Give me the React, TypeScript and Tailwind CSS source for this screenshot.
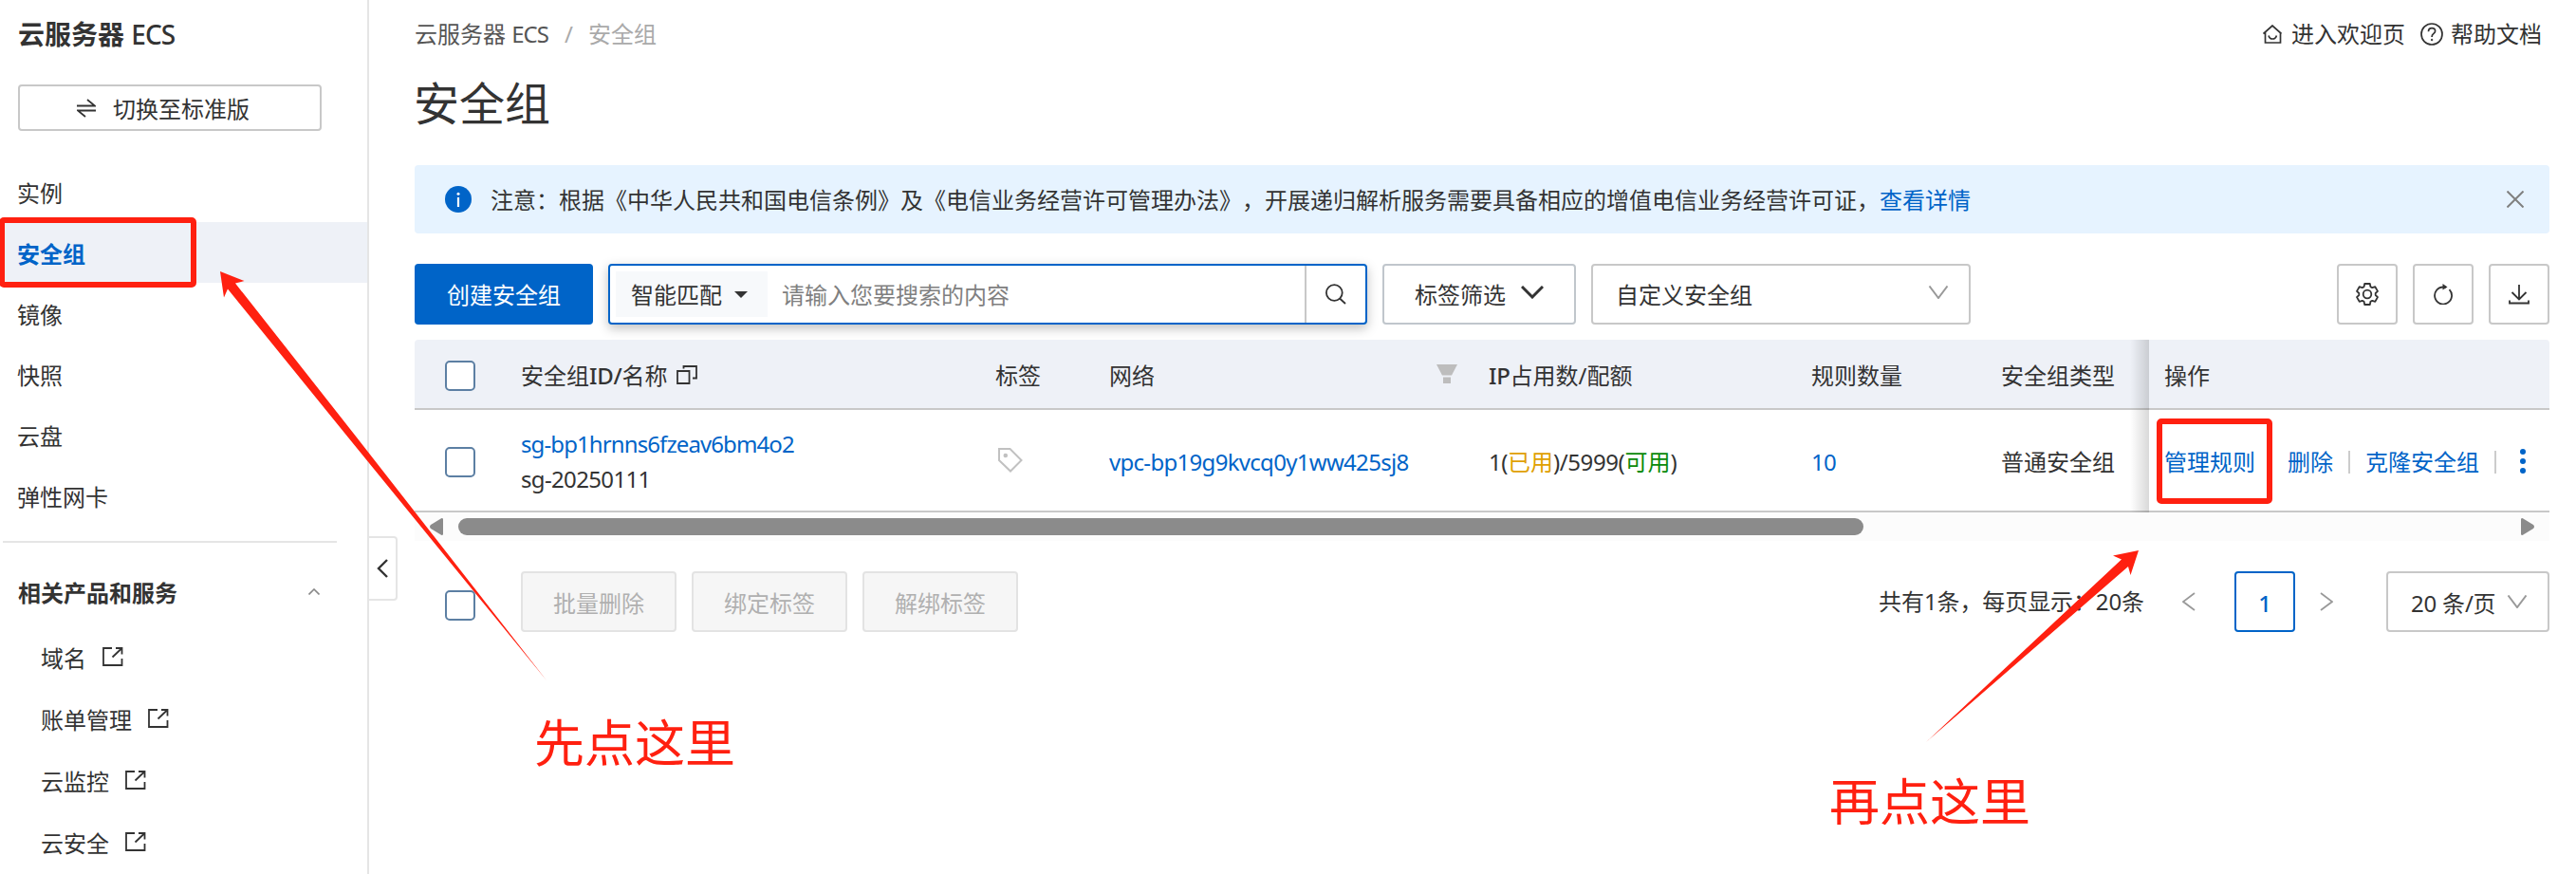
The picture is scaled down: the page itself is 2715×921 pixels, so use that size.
import React from 'react';

interface IconProps {
  className?: string;
}

const NAV_ITEMS: string[] = ['实例', '安全组', '镜像', '快照', '云盘', '弹性网卡'];
const RELATED_LINKS: string[] = ['域名', '账单管理', '云监控', '云安全'];
const BATCH_ACTIONS: string[] = ['批量删除', '绑定标签', '解绑标签'];

const SwitchIcon: React.FC<IconProps> = ({ className }) => (
  <svg className={className} width="20" height="20" viewBox="0 0 20 20" fill="none" stroke="#333" strokeWidth="1.8">
    <path d="M0 7.5h19L11 1M20 12.5H1l8 6.5" />
  </svg>
);

const ExternalIcon: React.FC<IconProps> = ({ className }) => (
  <svg className={className} width="22" height="20" viewBox="0 0 22 20" fill="none" stroke="#333" strokeWidth="1.8">
    <path d="M10 1H1v18h19.5V12M14 1h6.5v6.5M20.5 1L10.5 10.5" />
  </svg>
);

const HomeIcon: React.FC = () => (
  <svg width="20" height="20" viewBox="0 0 20 20" fill="none" stroke="#333" strokeWidth="1.7">
    <path d="M0.5 9.5L10 1l9.5 8.5M2.5 8v11h16V8" />
    <path d="M6 11.5c.6 2.4 2 3.5 4.200 3.500s3.600-1.100 4.200-3.500" />
  </svg>
);

const HelpIcon: React.FC = () => (
  <svg width="24" height="24" viewBox="0 0 24 24" fill="none" stroke="#333" strokeWidth="1.7">
    <circle cx="12" cy="12" r="11" />
    <path d="M8.500 9.200c0-2.100 1.500-3.500 3.600-3.500s3.500 1.300 3.500 3.100c0 2.600-3.500 2.700-3.500 5.700v.6" />
    <circle cx="12.1" cy="18" r="0.800" fill="#333" stroke="#333" strokeWidth="1" />
  </svg>
);

const InfoIcon: React.FC = () => (
  <svg width="28" height="28" viewBox="0 0 28 28">
    <circle cx="14" cy="14" r="14" fill="#0064c8" />
    <circle cx="14" cy="8.300" r="1.500" fill="#fff" />
    <path d="M14 12v10" stroke="#fff" strokeWidth="2.2" />
  </svg>
);

const CopyIcon: React.FC = () => (
  <svg width="22" height="20" viewBox="0 0 22 20" fill="none" stroke="#333" strokeWidth="1.8">
    <path d="M1 6h12.500v13H1zM7.500 3.500V1H21v12.500h-4" />
  </svg>
);

const FilterIcon: React.FC = () => (
  <svg className="mb-1" width="22" height="20" viewBox="0 0 22 20" fill="#bdbdbd">
    <path d="M0 0h22l-6 11.500H6zM7 13.500h8V20H7z" />
  </svg>
);

const TagIcon: React.FC = () => (
  <svg className="mb-1" width="26" height="26" viewBox="0 0 26 26" fill="none" stroke="#c1c1c1" strokeWidth="2">
    <path d="M1 1h11.500l12 12-11.500 11.500L1 13z" />
    <circle cx="7.800" cy="8" r="2.300" fill="#c1c1c1" stroke="none" />
  </svg>
);

const SearchIcon: React.FC = () => (
  <svg width="22" height="22" viewBox="0 0 22 22" fill="none" stroke="#333" strokeWidth="1.8">
    <circle cx="9.300" cy="9.500" r="8.400" />
    <path d="M15 15.500l6 5.500" />
  </svg>
);

const GearIcon: React.FC = () => (
  <svg width="24" height="24" viewBox="0 0 24 24" fill="none" stroke="#333" strokeWidth="1.8" strokeLinejoin="round">
    <path d="M9.200 1h5.600l.6 3.100 1.900 1.100 3-1 2.700 4.700-2.300 2.100v2l2.300 2.100-2.700 4.700-3-1-1.900 1.100-.6 3.100H9.200l-.6-3.100-1.900-1.100-3 1L1 15.100 3.300 13v-2L1 8.900l2.700-4.700 3 1 1.900-1.100z" />
    <circle cx="12" cy="12" r="4.300" />
  </svg>
);

const RefreshIcon: React.FC = () => (
  <svg width="20" height="22" viewBox="0 0 20 22" fill="none" stroke="#333" strokeWidth="1.8">
    <path d="M16.500 6.200a9 9 0 1 1-6.500-2.700h3" />
    <path d="M9.500 0l5 3.600-5 3z" fill="#333" stroke="none" />
  </svg>
);

const DownloadIcon: React.FC = () => (
  <svg width="22" height="22" viewBox="0 0 22 22" fill="none" stroke="#333" strokeWidth="1.800">
    <path d="M11 1v15M3.500 9l7.500 7.500L18.500 9M1 17.500v3h20v-3" />
  </svg>
);

interface ChevronProps extends IconProps {
  color?: string;
  weight?: number;
}

const ChevronDown: React.FC<ChevronProps> = ({ className, color = '#999', weight = 2 }) => (
  <svg className={className} width="24" height="14" viewBox="0 0 24 14" fill="none" stroke={color} strokeWidth={weight}>
    <path d={weight > 2 ? 'M1 1l11 11L23 1' : 'M2.500 0.500L12 13l9.500-12.500'} />
  </svg>
);

const ChevronSide: React.FC<{ right?: boolean }> = ({ right }) => (
  <svg width="14" height="20" viewBox="0 0 14 20" fill="none" stroke="#999" strokeWidth="1.8">
    <path d={right ? 'M1 1l12 9L1 19' : 'M13 1L1 10l12 9'} />
  </svg>
);

const Checkbox: React.FC = () => (
  <div className="h-8 w-8 shrink-0 rounded-[5px] border-2 border-[#5c7fa3] bg-white" />
);

const Sidebar: React.FC = () => (
  <aside className="relative flex h-full w-[389px] shrink-0 flex-col border-r-2 border-[#e5e5e5] text-[24px] leading-8">
    <h2 className="mt-5 pl-[19px] text-[28px] font-bold">
      云服务器 <span className="font-medium tracking-[-1px]">ECS</span>
    </h2>
    <button className="mt-[37px] ml-[19px] flex h-[49px] w-80 items-center rounded border-2 border-[#c8c8c8] pt-0.5 pl-15">
      <SwitchIcon className="mr-[18px] mb-0.5" />
      切换至标准版
    </button>
    <nav className="mt-8 flex flex-col">
      {NAV_ITEMS.map((item) => (
        <a
          key={item}
          className={
            item === '安全组'
              ? 'flex h-16 items-center bg-[#eef1f7] pt-[3px] pl-[18px] font-bold text-[#0064c8]'
              : 'flex h-16 items-center pt-[3px] pl-[18px]'
          }
        >
          {item}
        </a>
      ))}
    </nav>
    <div className="mt-4 ml-[3px] h-0.5 w-[352px] bg-[#e5e5e5]" />
    <div className="mt-[37px] flex items-center justify-between pr-[50px] pl-[19px] font-bold">
      相关产品和服务
      <svg className="mb-1" width="12" height="7" viewBox="0 0 12 7" fill="none" stroke="#888" strokeWidth="1.600">
        <path d="M0.500 6.500L6 1l5.500 5.500" />
      </svg>
    </div>
    <div className="mt-[19px] flex flex-col">
      {RELATED_LINKS.map((link) => (
        <a key={link} className="flex h-[65px] items-center pt-[3px] pl-[43px]">
          {link}
          <ExternalIcon className="mb-[5px] ml-[17px]" />
        </a>
      ))}
    </div>
    <div className="absolute top-[565px] left-[387px] flex h-[68px] w-8 items-center justify-center rounded-r border-2 border-[#e5e5e5] bg-white">
      <svg width="12" height="20" viewBox="0 0 12 20" fill="none" stroke="#333" strokeWidth="2.400">
        <path d="M11 1L2 10l9 9" />
      </svg>
    </div>
  </aside>
);

const PageHeader: React.FC = () => (
  <header>
    <div className="mt-[19px] flex items-center justify-between pr-2">
      <div className="flex items-center pt-px text-[#555]">
        云服务器&nbsp;<span className="tracking-[-1px]">ECS</span>
        <span className="ml-[17px] text-[#aaa]">/</span>
        <span className="ml-4 text-[#aaa]">安全组</span>
      </div>
      <div className="flex items-center">
        <HomeIcon />
        <span className="ml-[10px]">进入欢迎页</span>
        <span className="ml-4">
          <HelpIcon />
        </span>
        <span className="ml-2">帮助文档</span>
      </div>
    </div>
    <h1 className="mt-[25px] ml-[-1px] text-[48px] leading-[64px]">安全组</h1>
  </header>
);

const Notice: React.FC = () => (
  <div className="mt-[33px] flex h-[72px] items-center rounded bg-[#e6f3ff] pr-[27px] pl-8">
    <InfoIcon />
    <p className="ml-5 grow pt-0.5 [text-spacing-trim:space-all]">
      注意：根据《中华人民共和国电信条例》及《电信业务经营许可管理办法》，开展递归解析服务需要具备相应的增值电信业务经营许可证，
      <a className="text-[#0064c8]">查看详情</a>
    </p>
    <svg width="18" height="18" viewBox="0 0 18 18" fill="none" stroke="#808080" strokeWidth="2">
      <path d="M0.500 0.500l17 17M17.500 0.500l-17 17" />
    </svg>
  </div>
);

const Toolbar: React.FC = () => (
  <div className="mt-8 flex h-16 gap-4">
    <button className="w-[188px] rounded bg-[#0064c8] pt-0.5 text-white">创建安全组</button>
    <div className="flex w-[800px] items-center rounded border-2 border-[#0064c8] bg-white pl-1.5 shadow-[0_4px_12px_rgba(0,0,0,0.25)]">
      <div className="flex h-12 w-40 items-center bg-[#f7f9fb] pt-0.5 pl-4">
        智能匹配
        <svg className="mb-0.5 ml-[13px]" width="14" height="7" viewBox="0 0 14 7" fill="#333">
          <path d="M0 0h14L7 7z" />
        </svg>
      </div>
      <span className="ml-[15px] grow pt-0.5 text-[#808080]">请输入您要搜索的内容</span>
      <div className="flex h-full w-16 items-center justify-center border-l-2 border-[#c8c8c8]">
        <SearchIcon />
      </div>
    </div>
    <button className="flex w-[204px] items-center rounded border-2 border-[#c0c6cc] pt-0.5 pl-8">
      标签筛选
      <ChevronDown className="mb-1.5 ml-4" color="#333" weight={3} />
    </button>
    <div className="flex w-[400px] items-center justify-between rounded border-2 border-[#c8c8c8] pt-0.5 pr-5 pl-6">
      自定义安全组
      <ChevronDown className="mb-1.5" />
    </div>
    <div className="ml-auto flex gap-4">
      <button className="flex w-16 items-center justify-center rounded border-2 border-[#c8c8c8]">
        <GearIcon />
      </button>
      <button className="flex w-16 items-center justify-center rounded border-2 border-[#c8c8c8]">
        <RefreshIcon />
      </button>
      <button className="flex w-16 items-center justify-center rounded border-2 border-[#c8c8c8]">
        <DownloadIcon />
      </button>
    </div>
  </div>
);

const GRID =
  'grid grid-cols-[96px_500px_120px_400px_340px_200px_172px_422px] items-center border-b-2 border-[#c8c8c8] pt-1';

const GroupTable: React.FC = () => (
  <section className="relative mt-4">
    <div className={GRID + ' h-[74px] rounded-t bg-[#eef1f7]'}>
      <div className="pl-8">
        <Checkbox />
      </div>
      <div className="flex items-center pl-4">
        安全组<span className="font-medium tracking-[-0.3px]">ID/</span>名称
        <span className="mb-0.5 ml-[10px]">
          <CopyIcon />
        </span>
      </div>
      <div className="pl-4">标签</div>
      <div className="flex items-center justify-between pr-[17px] pl-4">
        网络
        <FilterIcon />
      </div>
      <div className="pl-4">
        <span className="font-medium tracking-[-0.3px]">IP</span>占用数/配额
      </div>
      <div className="pl-4">规则数量</div>
      <div className="pl-4">安全组类型</div>
      <div className="pl-4">操作</div>
    </div>
    <div className={GRID + ' h-[108px]'}>
      <div className="pl-8">
        <Checkbox />
      </div>
      <div className="pb-0.5 pl-4 leading-[37px]">
        <p className="tracking-[-0.9px] text-[#0064c8]">sg-bp1hrnns6fzeav6bm4o2</p>
        <p className="tracking-[-0.65px]">sg-20250111</p>
      </div>
      <div className="pl-[19px]">
        <TagIcon />
      </div>
      <div className="pl-4 tracking-[-0.7px] text-[#0064c8]">vpc-bp19g9kvcq0y1ww425sj8</div>
      <div className="flex pl-4">
        <span className="tracking-[-0.5px]">1(</span>
        <span className="text-[#e0a000]">已用</span>
        <span className="tracking-[-0.4px]">)/5999(</span>
        <span className="text-[#0a8a0a]">可用</span>)
      </div>
      <div className="pl-4 tracking-[-0.8px] text-[#0064c8]">10</div>
      <div className="pl-4">普通安全组</div>
      <div className="flex items-center pl-4 text-[#0064c8]">
        <a>管理规则</a>
        <span className="mx-4 h-6 w-0.5 bg-[#ccc]" />
        <a>删除</a>
        <span className="mx-4 h-6 w-0.5 bg-[#ccc]" />
        <a>克隆安全组</a>
        <span className="mx-4 h-6 w-0.5 bg-[#ccc]" />
        <span className="mb-0.5 ml-[9px] flex flex-col gap-1">
          <i className="h-1.5 w-1.5 rounded-full bg-[#0064c8]" />
          <i className="h-1.5 w-1.5 rounded-full bg-[#0064c8]" />
          <i className="h-1.5 w-1.5 rounded-full bg-[#0064c8]" />
        </span>
      </div>
    </div>
    {/* shadow cast by the pinned column */}
    <div className="absolute top-0 right-[422px] h-[182px] w-5 bg-linear-to-r from-transparent to-black/15" />
    <div className="flex h-[30px] items-center justify-between bg-[#fcfcfc] px-4">
      <svg width="14" height="18" viewBox="0 0 14 18" fill="#8b8b8b">
        <path d="M14 1v16q0 1-1.500 1L1 11q-2-2 0-4L12.500 0Q14 0 14 1z" />
      </svg>
      <div className="mr-auto ml-4 h-[18px] w-[1481px] rounded-full bg-[#8b8b8b]" />
      <svg width="14" height="18" viewBox="0 0 14 18" fill="#8b8b8b">
        <path d="M0 1v16q0 1 1.500 1L13 11q2-2 0-4L1.500 0Q0 0 0 1z" />
      </svg>
    </div>
  </section>
);

const TableFooter: React.FC = () => (
  <footer className="mt-8 flex h-16 items-center">
    <div className="mt-2 mr-12 ml-8">
      <Checkbox />
    </div>
    <div className="flex h-full gap-4">
      {BATCH_ACTIONS.map((action) => (
        <button key={action} className="w-[164px] rounded border-2 border-[#e3e3e3] bg-[#f6f6f6] pt-[3px] text-[#b0b0b0]">
          {action}
        </button>
      ))}
    </div>
    <div className="ml-auto flex h-full items-center">
      <span className="mr-10 tracking-[-0.1px]">共有1条，每页显示：20条</span>
      <ChevronSide />
      <span className="mr-[26px] ml-[41px] flex h-16 w-16 items-center justify-center rounded border-2 border-[#0064c8] pt-1 font-medium text-[#0064c8]">
        1
      </span>
      <ChevronSide right />
      <div className="ml-14 flex h-16 w-[172px] items-center justify-between rounded border-2 border-[#c8c8c8] pr-5 pl-6">
        <span className="mt-1 whitespace-nowrap tracking-[-0.2px]">20 条/页</span>
        <ChevronDown />
      </div>
    </div>
  </footer>
);

// red callouts drawn over the console
const Annotations: React.FC = () => (
  <div className="pointer-events-none absolute inset-0">
    <div className="absolute top-[229px] left-[-1px] h-[74px] w-[208px] rounded-[5px] border-[6px] border-[#ff2010]" />
    <div className="absolute top-[441px] left-[2273px] h-[90px] w-[122px] rounded-[5px] border-[6px] border-[#ff2010]" />
    <svg className="absolute inset-0" width="2715" height="921" viewBox="0 0 2715 921" fill="#ff2010">
      <path d="M232 286l25.500 10-9.500 2.500L376 461 576 717 367 461 240 304.500l-4 9z" />
      <path d="M2254 580l-27 5.500 9 4L2030 782l213-185 2.500 9z" />
    </svg>
    <p className="absolute top-[753px] left-[563px] text-[53px] leading-[60px] text-[#ff2010]">先点这里</p>
    <p className="absolute top-[815px] left-[1928px] text-[53px] leading-[60px] text-[#ff2010]">再点这里</p>
  </div>
);

const App: React.FC = () => (
  <div className="relative flex h-[921px] w-[2715px] overflow-hidden bg-white font-['Noto_Sans','Noto_Sans_CJK_SC',sans-serif] text-[#333]">
    <Sidebar />
    <main className="ml-12 flex w-[2250px] flex-col text-[24px] leading-8">
      <PageHeader />
      <Notice />
      <Toolbar />
      <GroupTable />
      <TableFooter />
    </main>
    <Annotations />
  </div>
);

export default App;
